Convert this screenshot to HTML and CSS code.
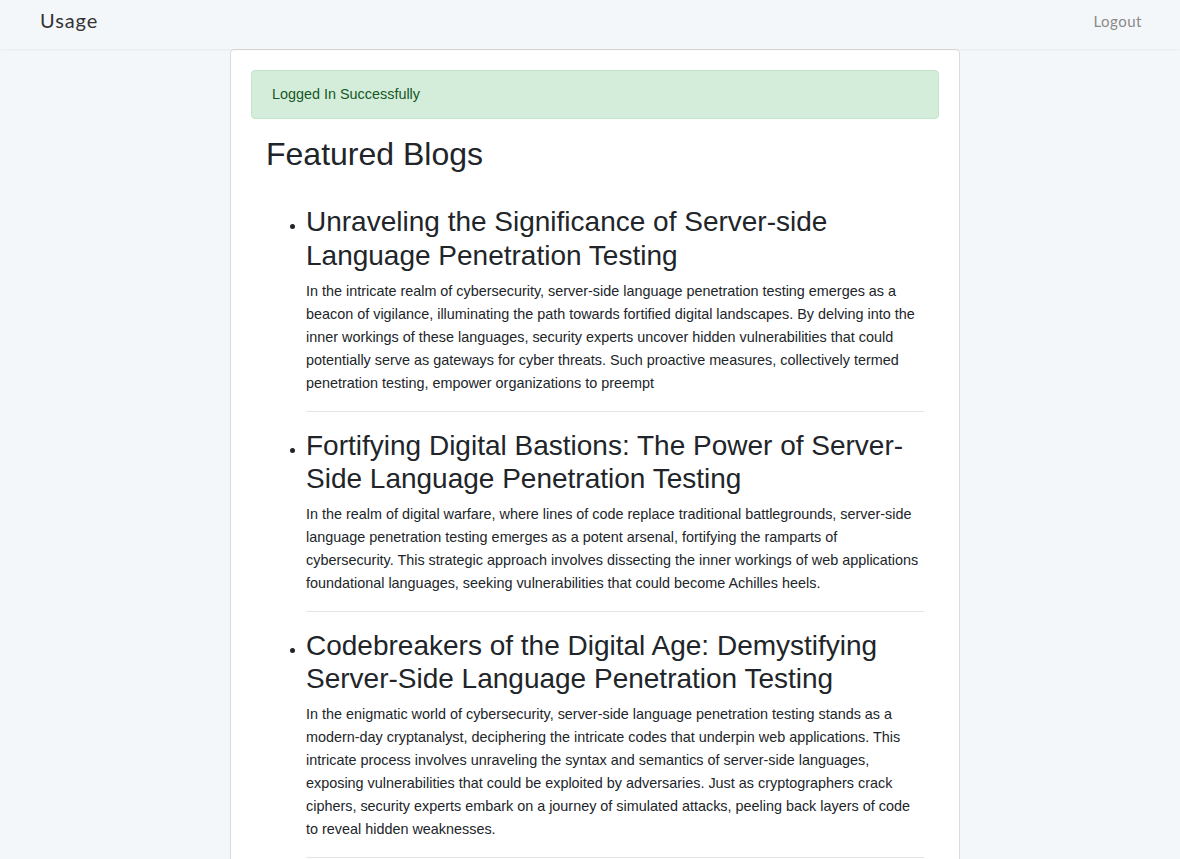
FILE: index.html
```html
<!DOCTYPE html>
<html lang="en">
<head>
<meta charset="utf-8">
<title>Usage</title>
<link rel="stylesheet" href="styles.css">
</head>
<body>
<header class="navbar">
  <a class="brand" href="#">Usage</a>
  <a class="logout" href="#">Logout</a>
</header>
<div class="page">
  <main class="card">
    <div class="alert">Logged In Successfully</div>
    <div class="content">
      <h2 class="section-title">Featured Blogs</h2>
      <ul class="blog-list">
        <li class="blog">
          <h3 class="blog-title">Unraveling the Significance of Server-side Language Penetration Testing</h3>
          <p class="blog-text">In the intricate realm of cybersecurity, server-side language penetration testing emerges as a beacon of vigilance, illuminating the path towards fortified digital landscapes. By delving into the inner workings of these languages, security experts uncover hidden vulnerabilities that could potentially serve as gateways for cyber threats. Such proactive measures, collectively termed penetration testing, empower organizations to preempt</p>
          <hr class="divider">
        </li>
        <li class="blog">
          <h3 class="blog-title">Fortifying Digital Bastions: The Power of Server-Side Language Penetration Testing</h3>
          <p class="blog-text">In the realm of digital warfare, where lines of code replace traditional battlegrounds, server-side language penetration testing emerges as a potent arsenal, fortifying the ramparts of cybersecurity. This strategic approach involves dissecting the inner workings of web applications foundational languages, seeking vulnerabilities that could become Achilles heels.</p>
          <hr class="divider">
        </li>
        <li class="blog">
          <h3 class="blog-title">Codebreakers of the Digital Age: Demystifying Server-Side Language Penetration Testing</h3>
          <p class="blog-text">In the enigmatic world of cybersecurity, server-side language penetration testing stands as a modern-day cryptanalyst, deciphering the intricate codes that underpin web applications. This intricate process involves unraveling the syntax and semantics of server-side languages, exposing vulnerabilities that could be exploited by adversaries. Just as cryptographers crack ciphers, security experts embark on a journey of simulated attacks, peeling back layers of code to reveal hidden weaknesses.</p>
          <hr class="divider">
        </li>
      </ul>
    </div>
  </main>
</div>
</body>
</html>
```

FILE: styles.css
```css
* { box-sizing: border-box; }

html, body {
  margin: 0;
  padding: 0;
}

body {
  background: #f4f7fa;
  font-family: "Liberation Sans", Arial, sans-serif;
  font-size: 14.4px;
  line-height: 23px;
  color: #212529;
}

.navbar {
  height: 49px;
  background: #f4f7fa;
  display: flex;
  align-items: center;
  justify-content: space-between;
  padding: 0 38px 0 40px;
  box-shadow: 0 1px 2px rgba(0, 0, 0, 0.05);
  position: relative;
  z-index: 1;
}

.brand {
  font-family: Lato, "Open Sans", sans-serif;
  font-size: 20px;
  color: #333;
  text-decoration: none;
  margin-top: -8px;
  letter-spacing: 0.9px;
}

.logout {
  font-family: Lato, "Open Sans", sans-serif;
  font-size: 15px;
  color: #8a8a8a;
  text-decoration: none;
  margin-top: -7px;
  letter-spacing: 0.5px;
}

.page {
  display: flex;
  justify-content: center;
  padding-left: 10px;
}

.card {
  width: 730px;
  min-height: 820px;
  background: #fff;
  border: 1px solid #dcdcdc;
  border-radius: 4px 4px 0 0;
  padding: 20px 20px 0;
}

.alert {
  background: #d4edda;
  border: 1px solid #c3e6cb;
  color: #155724;
  border-radius: 4px;
  padding: 12px 20px;
  line-height: 23px;
  margin-bottom: 16px;
}

.content {
  padding: 0 15px;
}

.section-title {
  font-size: 32px;
  font-weight: 400;
  line-height: 38.4px;
  margin: 0;
}

.blog-list {
  margin: 32px 0 0;
  padding-left: 40px;
}

.blog {
  font-size: 16px;
}

.blog-title {
  font-size: 28px;
  font-weight: 400;
  line-height: 33.6px;
  margin: 0 0 7px;
}

.blog-text {
  font-size: 14.4px;
  line-height: 23px;
  margin: 0 0 16px;
}

.divider {
  border: 0;
  border-top: 1px solid #e5e5e5;
  margin: 0 0 17px;
}
```
